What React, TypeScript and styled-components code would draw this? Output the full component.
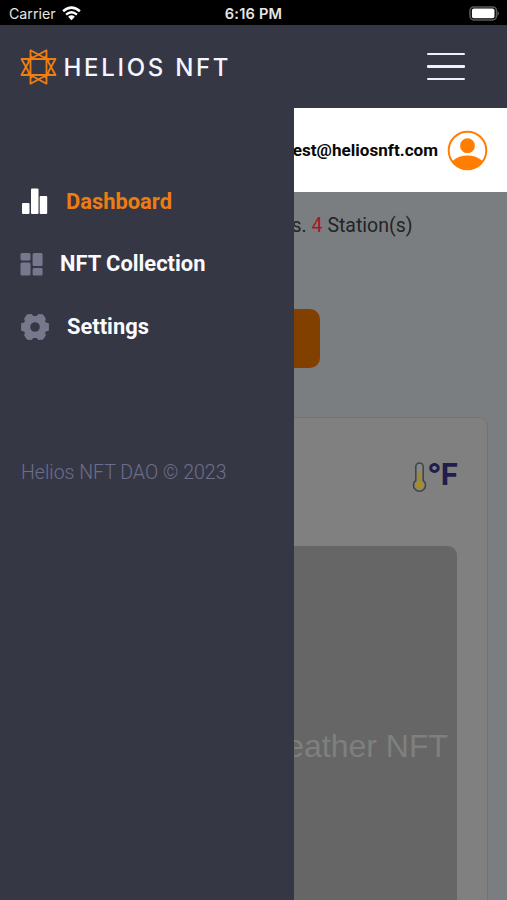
import React from "react";
import styled, { createGlobalStyle } from "styled-components";

const Global = createGlobalStyle`
  * { box-sizing: border-box; }
  body { margin: 0; background: #7b7e80; font-family: Roboto, sans-serif; }
  svg { flex: none; }
`;

const Screen = styled.div`
  width: 507px;
  height: 900px;
  overflow: hidden;
  display: flex;
  flex-direction: column;
  background: #7b7e80;
`;

const StatusBar = styled.div`
  height: 25px;
  flex: none;
  padding: 1px 7px 0 9px;
  display: grid;
  grid-template-columns: 1fr auto 1fr;
  align-items: center;
  background: #000;
  color: #e6e6e6;
  font: 400 14.2px Inter, sans-serif;
`;

const Carrier = styled.div`
  display: flex;
  align-items: center;
  gap: 6px;
`;

const Clock = styled.div`
  margin-right: 2px;
  padding-top: 1px;
  font-weight: 600;
  font-size: 14.6px;
  letter-spacing: 0.2px;
`;

const Battery = styled.svg`
  justify-self: end;
`;

const Header = styled.header`
  height: 83px;
  flex: none;
  padding: 0 42px 0 20px;
  display: flex;
  align-items: center;
  justify-content: space-between;
  background: #363745;
`;

const Brand = styled.div`
  display: flex;
  align-items: center;
  gap: 6.5px;
  color: #f4f5ff;
  font: 500 24px/36px Inter, sans-serif;
  letter-spacing: 2.7px;
  white-space: nowrap;
`;

const BrandName = styled.span`
  padding-top: 2px;
`;

const MenuButton = styled.button`
  border: 0;
  padding: 0;
  background: none;
  width: 38px;
  display: flex;
  flex-direction: column;
  gap: 10px;
`;

const MenuLine = styled.span`
  height: 2.5px;
  border-radius: 1px;
  background: #eef0fa;
`;

const Body = styled.div`
  flex: 1;
  min-height: 0;
  display: flex;
`;

const Drawer = styled.nav`
  width: 294px;
  flex: none;
  padding: 75px 0 0 20px;
  background: #363745;
`;

const NavItem = styled.a<{ $active?: boolean; $gap: number }>`
  height: 36px;
  margin-bottom: 27px;
  display: flex;
  align-items: center;
  gap: ${(p) => p.$gap}px;
  color: ${(p) => (p.$active ? "#ee7d11" : "#fafaff")};
  font-size: 21.9px;
  line-height: 24px;
  font-weight: 700;
  white-space: nowrap;
`;

const Label = styled.span<{ $low?: boolean }>`
  padding: ${(p) => (p.$low ? "1px 0 0" : "0 0 1px")};
`;

const Copyright = styled.div`
  margin-top: 116px;
  padding-left: 1px;
  color: #6d6e8b;
  font-size: 19.5px;
  font-weight: 300;
  line-height: 24px;
  white-space: nowrap;
`;

const Page = styled.main`
  flex: 1;
  min-width: 0;
  overflow: hidden;
  display: flex;
  flex-direction: column;
`;

const AccountBar = styled.div`
  height: 84px;
  flex: none;
  padding-right: 19px;
  display: flex;
  align-items: center;
  justify-content: flex-end;
  gap: 9px;
  background: #fff;
  color: #080808;
  font-size: 17.1px;
  font-weight: 700;
  white-space: nowrap;
`;

const Stations = styled.div`
  height: 66px;
  flex: none;
  padding-right: 94.5px;
  display: flex;
  align-items: center;
  justify-content: flex-end;
  color: #222425;
  font-size: 19.5px;
  white-space: pre;
`;

const Count = styled.span`
  color: #b01228;
`;

const ActionButton = styled.button`
  width: 26px;
  height: 59px;
  margin-top: 51px;
  flex: none;
  border: 0;
  border-radius: 0 10px 10px 0;
  background: #824000;
`;

const Card = styled.section`
  flex: 1;
  width: 194px;
  margin-top: 49px;
  border: solid #717476;
  border-width: 1.5px 1.5px 0 0;
  border-top-right-radius: 9px;
  background: #808080;
`;

const Units = styled.div`
  height: 128px;
  padding: 0 29px 13px 0;
  display: flex;
  align-items: center;
  justify-content: flex-end;
  color: #211d4c;
  font: 700 30px/36px Inter, sans-serif;
  letter-spacing: -0.4px;
`;

const Degrees = styled.span`
  padding-bottom: 3px;
`;

const Thermometer = styled.svg`
  margin-top: 3px;
`;

const Preview = styled.div`
  width: 163px;
  height: 400px;
  padding: 182px 9px 0 0;
  border-top-right-radius: 9px;
  overflow: hidden;
  display: flex;
  justify-content: flex-end;
  background: #666;
  color: #7f7f7f;
  font: 32px/36px "Liberation Sans", sans-serif;
  white-space: nowrap;
`;

const Logo = () => (
  <svg width="37" height="36" viewBox="-18.5 -18 37 36" fill="none" stroke="#f07f12" strokeWidth="1.8" strokeLinejoin="round">
    <path d="M-8 -8H8V8H-8Z" />
    <path d="M-8 -8V-16.7L11 -6.5M8 -8V-16.7L-11 -6.5" />
    <path d="M-8 8V16.7L11 6.5M8 8V16.7L-11 6.5" />
    <path d="M-8 -8H-17L-6.5 11M-8 8H-17L-6.5 -11" />
    <path d="M8 -8H17L6.5 11M8 8H17L6.5 -11" />
  </svg>
);

const Wifi = () => (
  <svg width="19" height="15" viewBox="0 0 19 15" fill="none" stroke="#fff" strokeWidth="2.5">
    <path d="M1.1 5.3Q9.5-2.1 17.9 5.3M4.1 8.6Q9.5 4 14.9 8.6" />
    <path d="M6.1 10.7Q9.5 7.8 12.9 10.7L9.5 14.2Z" fill="#fff" stroke="none" />
  </svg>
);

const Bars = () => (
  <svg width="28" height="26" fill="#fff">
    <rect x="2" y="15" width="7.5" height="11" rx="1" />
    <rect x="11" y="0.5" width="7.5" height="25.5" rx="1" />
    <rect x="19.7" y="8" width="7.5" height="18" rx="1" />
  </svg>
);

const Tiles = () => (
  <svg width="23" height="23" fill="#77788b">
    <rect x="0.5" width="10" height="7.5" rx="1.5" />
    <rect x="0.5" y="9.5" width="10" height="13" rx="1.5" />
    <rect x="12.6" width="10" height="13" rx="1.5" />
    <rect x="12.6" y="15" width="10" height="7.5" rx="1.5" />
  </svg>
);

const Gear = () => (
  <svg width="30" height="28" viewBox="-15 -14 30 28">
    <path
      fill="#77788b"
      stroke="#77788b"
      strokeWidth="2"
      strokeLinejoin="round"
      fillRule="evenodd"
      d="M-7.4-11.8L-4-12L-2.2-10H2.2L4-12L7.4-11.8L9.8-8.2L9-5.4L10.6-3.4L12.9-3V3L10.6 3.4L9 5.4L9.8 8.2L7.4 11.8L4 12L2.2 10H-2.2L-4 12L-7.4 11.8L-9.8 8.2L-9 5.4L-10.6 3.4L-12.9 3V-3L-10.6-3.4L-9-5.4L-9.8-8.2ZM0-5.8A5.8 5.8 0 1 0 0 5.8A5.8 5.8 0 1 0 0-5.8Z"
    />
  </svg>
);

const Avatar = () => (
  <svg width="41" height="41" viewBox="0 0 41 41">
    <circle cx="20.5" cy="20.5" r="18.8" fill="none" stroke="#ff7d00" strokeWidth="2" />
    <circle cx="20.5" cy="15.7" r="7.4" fill="#ff7d00" />
    <path d="M5.6 31Q12 25.6 20.5 25.6T35.4 31A18.3 18.3 0 0 1 5.6 31Z" fill="#ff7d00" />
  </svg>
);

export default function App() {
  return (
    <Screen>
      <Global />
      <StatusBar>
        <Carrier>Carrier <Wifi /></Carrier>
        <Clock>6:16 PM</Clock>
        <Battery width="31" height="15" viewBox="0 0 31 15">
          <rect x="1" y="0.9" width="26.5" height="13" rx="3.8" fill="#000" stroke="#5b5b5b" strokeWidth="1.5" />
          <rect x="2.9" y="2.6" width="22.6" height="9.6" rx="2" fill="#fff" />
          <path d="M28.5 5Q31.5 7.4 28.5 9.8Z" fill="#5b5b5b" />
        </Battery>
      </StatusBar>
      <Header>
        <Brand><Logo /><BrandName>HELIOS NFT</BrandName></Brand>
        <MenuButton aria-label="Menu"><MenuLine /><MenuLine /><MenuLine /></MenuButton>
      </Header>
      <Body>
        <Drawer>
          <NavItem $active $gap={18}><Bars /><Label $low>Dashboard</Label></NavItem>
          <NavItem $gap={17}><Tiles /><Label>NFT Collection</Label></NavItem>
          <NavItem $gap={17}><Gear /><Label>Settings</Label></NavItem>
          <Copyright>Helios NFT DAO © 2023</Copyright>
        </Drawer>
        <Page>
          <AccountBar>test@heliosnft.com<Avatar /></AccountBar>
          <Stations>s. <Count>4</Count> Station(s)</Stations>
          <ActionButton aria-label="Add station" />
          <Card>
            <Units>
              <Thermometer width="15" height="31" viewBox="0 0 15 31">
                <path d="M3.8 4.7A3.7 3.7 0 0 1 11.2 4.7V18.5A6 6 0 1 1 3.8 18.5Z" fill="#858889" stroke="#424744" strokeWidth="1.6" />
                <path d="M7.5 9V23" stroke="#9e8b35" strokeWidth="2.8" />
                <circle cx="7.5" cy="23.4" r="3.3" fill="#ad8e15" />
              </Thermometer>
              <Degrees>°F</Degrees>
            </Units>
            <Preview>Weather NFT</Preview>
          </Card>
        </Page>
      </Body>
    </Screen>
  );
}
